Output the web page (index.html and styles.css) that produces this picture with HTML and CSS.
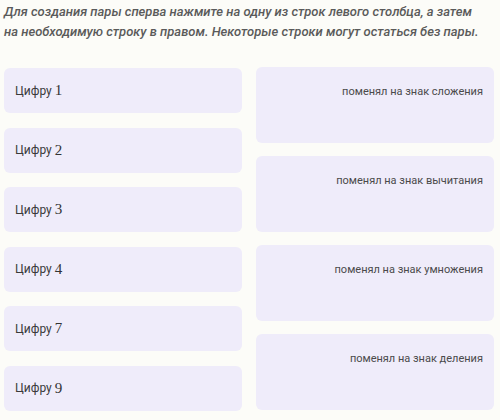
FILE: index.html
```html
<!DOCTYPE html>
<html lang="ru">
<head>
    <meta charset="UTF-8">
    <meta name="viewport" content="width=device-width, initial-scale=1.0">
    <title>Сопоставление</title>
    <link rel="stylesheet" href="styles.css">
</head>
<body>
    <div class="task">
        <p class="hint">Для создания пары сперва нажмите на одну из строк левого столбца, а затем<br>на необходимую строку в правом. Некоторые строки могут остаться без пары.</p>

        <div class="pairs">
            <div class="column left">
                <div class="item">Цифру <span class="num">1</span></div>
                <div class="item">Цифру <span class="num">2</span></div>
                <div class="item">Цифру <span class="num">3</span></div>
                <div class="item">Цифру <span class="num">4</span></div>
                <div class="item">Цифру <span class="num">7</span></div>
                <div class="item">Цифру <span class="num">9</span></div>
            </div>
            <div class="column right">
                <div class="option">поменял на знак сложения</div>
                <div class="option">поменял на знак вычитания</div>
                <div class="option">поменял на знак умножения</div>
                <div class="option">поменял на знак деления</div>
            </div>
        </div>
    </div>
</body>
</html>
```

FILE: styles.css
```css
body {
    margin: 0;
    padding: 0;
    background-color: #fcfcf8;
    font-family: Roboto, "Noto Sans", sans-serif;
    color: #444;
}
.task {
    padding: 2px 6px 0 4px;
}
.hint {
    margin: 0;
    font-size: 13px;
    line-height: 20px;
    font-style: italic;
    font-weight: 500;
    color: #5a5a5a;
    white-space: nowrap;
}
.pairs {
    display: grid;
    grid-template-columns: 1fr 1fr;
    column-gap: 14px;
}
.column {
    display: flex;
    flex-direction: column;
}
.left {
    margin-top: 26px;
    gap: 14.5px;
}
.right {
    margin-top: 25px;
    gap: 13px;
}
.item {
    height: 45px;
    display: flex;
    align-items: center;
    padding-left: 11px;
    background-color: #efecfa;
    border-radius: 6px;
    font-size: 12px;
    color: #3a3a3a;
    white-space: pre;
}
.item .num {
    font-family: "Liberation Serif", serif;
    font-size: 15px;
    color: #333;
}
.option {
    height: 76px;
    box-sizing: border-box;
    padding: 18px 11px 0 0;
    text-align: right;
    background-color: #efecfa;
    border-radius: 6px;
    font-size: 11px;
    color: #4a4a4a;
}
```
